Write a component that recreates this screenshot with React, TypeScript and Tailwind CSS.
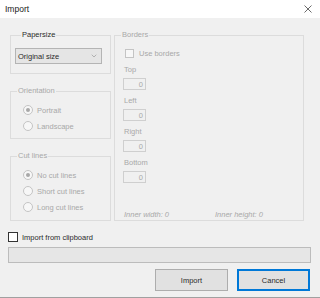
import { ChevronDown } from "lucide-react";

function Radio({ label, checked }: { label: string; checked?: boolean }) {
  return (
    <div className="flex h-[16px] items-center gap-[4px] pl-[12px]">
      <span className="flex h-[10px] w-[10px] items-center justify-center rounded-full border border-[#c4c4c4] bg-[#f7f7f7]">
        {checked && <span className="h-[4px] w-[4px] rounded-full bg-[#a8a8a8]" />}
      </span>
      <span className="text-[#a8a8a8]">{label}</span>
    </div>
  );
}

function NumBox({ label }: { label: string }) {
  return (
    <div className="mt-[6px] flex flex-col">
      <span className="ml-[1px] h-[10px] leading-[10px] text-[#a8a8a8]">{label}</span>
      <div className="mt-[3px] flex h-[12px] w-[23px] items-center justify-end border border-[#cfcfcf] bg-[#f0f0f0] pr-[2px] text-[#a8a8a8]">
        0
      </div>
    </div>
  );
}

export default function App() {
  return (
    <div className="flex h-[298px] w-[320px] flex-col bg-white font-['Liberation_Sans',Arial,sans-serif] text-[7.5px] leading-[9px] text-[#2b2b2b] antialiased">
      {/* Title bar */}
      <div className="flex h-[18px] items-center justify-between bg-white pl-[5px] pr-[8px]">
        <span className="text-[8.5px] text-[#1a1a1a]">Import</span>
        <svg width="8" height="8" viewBox="0 0 8 8" className="text-[#444]">
          <path d="M0.5 0.5 L7.5 7.5 M7.5 0.5 L0.5 7.5" stroke="currentColor" strokeWidth="0.8" />
        </svg>
      </div>

      {/* Body */}
      <div className="flex flex-1 flex-col border-b border-[#a0a0a0] bg-[#f0f0f0] pl-[8px] pr-[9px] pt-[13px]">
        <div className="ml-[2px] flex gap-[3px]">
          {/* Left column */}
          <div className="flex w-[101px] flex-col gap-[13px]">
            <fieldset className="border border-[#dcdcdc] pb-[9px] pl-[4px] pt-[9px]">
              <legend className="ml-[6px] px-[1px] leading-[8px]">Papersize</legend>
              <div className="flex h-[16px] w-[87px] items-center justify-between border border-[#b4b4b4] bg-[#e5e5e5] pl-[2px] pr-[3px]">
                <span>Original size</span>
                <ChevronDown className="h-[8px] w-[8px] text-[#666]" strokeWidth={1.25} />
              </div>
            </fieldset>

            <fieldset className="border border-[#dcdcdc] pb-[4px] pt-[7px]">
              <legend className="ml-[6px] px-[1px] leading-[8px] text-[#a8a8a8]">Orientation</legend>
              <Radio label="Portrait" checked />
              <Radio label="Landscape" />
            </fieldset>

            <fieldset className="border border-[#dcdcdc] pb-[5px] pt-[7px]">
              <legend className="ml-[6px] px-[1px] leading-[8px] text-[#a8a8a8]">Cut lines</legend>
              <Radio label="No cut lines" checked />
              <Radio label="Short cut lines" />
              <Radio label="Long cut lines" />
            </fieldset>
          </div>

          {/* Borders */}
          <fieldset className="flex w-[190px] flex-col border border-[#dcdcdc] pb-[1px] pl-[8px]">
            <legend className="ml-[-2px] px-[1px] leading-[8px] text-[#a8a8a8]">Borders</legend>
            <div className="ml-[2px] mt-[8px] flex h-[12px] items-center gap-[5px]">
              <span className="h-[9px] w-[9px] border border-[#c4c4c4] bg-[#f7f7f7]" />
              <span className="text-[#a8a8a8]">Use borders</span>
            </div>
            <NumBox label="Top" />
            <NumBox label="Left" />
            <NumBox label="Right" />
            <NumBox label="Bottom" />
            <div className="mt-auto flex h-[10px] items-center italic text-[#a8a8a8]">
              <span className="ml-[1px] w-[91px]">Inner width: 0</span>
              <span>Inner height: 0</span>
            </div>
          </fieldset>
        </div>

        {/* Import from clipboard */}
        <div className="mt-[11px] flex h-[10px] items-center gap-[4px]">
          <span className="h-[10px] w-[10px] border border-[#333] bg-white" />
          <span>Import from clipboard</span>
        </div>

        {/* Progress */}
        <div className="mt-[5px] h-[16px] w-full border border-[#bcbcbc] bg-[#e6e6e6]" />

        {/* Buttons */}
        <div className="mt-[6px] flex justify-end gap-[9px] pr-[1px]">
          <button className="flex h-[22px] w-[73px] items-center justify-center border border-[#adadad] bg-[#e1e1e1]">
            Import
          </button>
          <button className="flex h-[22px] w-[73px] items-center justify-center border-2 border-[#0078d7] bg-[#e1e1e1]">
            Cancel
          </button>
        </div>
      </div>
    </div>
  );
}
